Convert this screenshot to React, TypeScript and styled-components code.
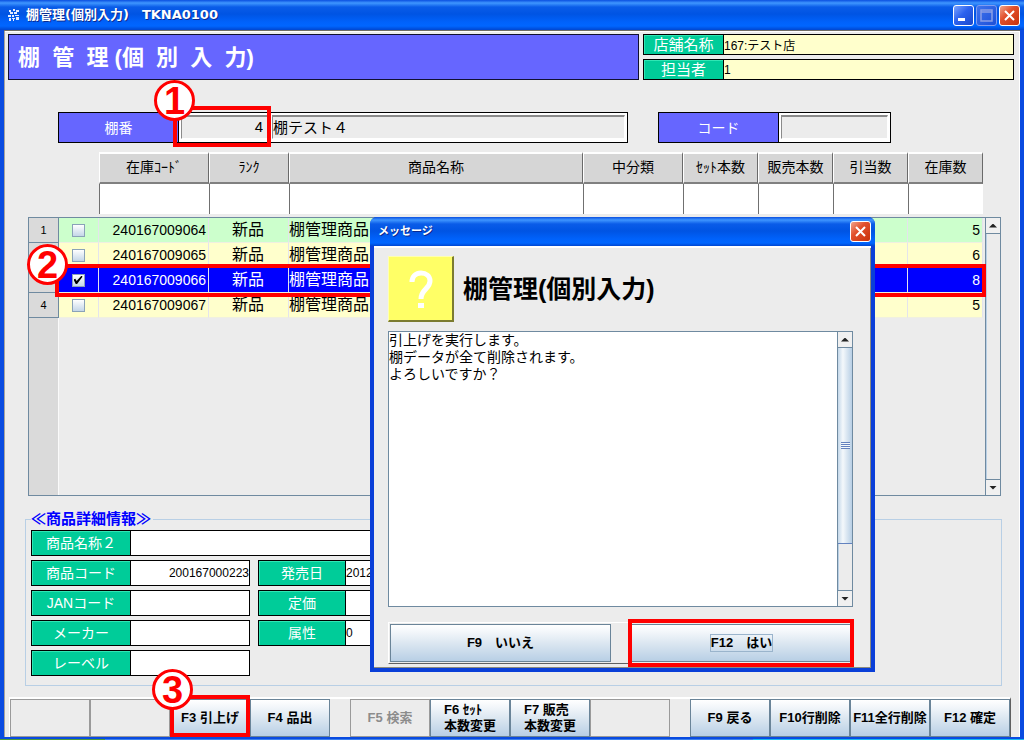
import React from 'react';
import styled, { createGlobalStyle, css } from 'styled-components';

const Global = createGlobalStyle`
  *, *::before, *::after { box-sizing: border-box; }
  body {
    margin: 0;
    background: #ececec;
    color: #000;
    font-family: "Liberation Sans", "Noto Sans CJK JP", sans-serif;
    font-size: 14px;
    line-height: 16px;
  }
  button, input, textarea { font-family: inherit; color: inherit; margin: 0; border-radius: 0; }
`;

const titleGradient = 'linear-gradient(#0a4fe0 0, #3f96ff 3px, #0a5ce8 7px, #0054e3 14px, #0062fb 22px, #0066ff 26px, #0046d0 100%)';
const metal = 'linear-gradient(#ffffff 0, #f2f6fa 20%, #dce7f1 50%, #b8cfe5 100%)';

const AppWindow = styled.main`
  position: relative;
  display: flex;
  flex-direction: column;
  min-height: 100vh;
  overflow: hidden;
`;

const TitleBar = styled.header<{ $h: number }>`
  display: flex;
  align-items: center;
  gap: 6px;
  height: ${p => p.$h}px;
  padding: 0 4px 0 8px;
  background: ${titleGradient};
  color: #fff;
`;

const TitleText = styled.h1<{ $size: number }>`
  flex: 1;
  margin: 0;
  font-family: "DejaVu Sans", "Noto Sans CJK JP", sans-serif;
  font-size: ${p => p.$size}px;
  line-height: 16px;
  font-weight: 700;
  white-space: pre;
  text-shadow: 1px 1px 0 #0a2a90;
`;

const CaptionButtons = styled.div`
  display: flex;
  gap: 2px;
`;

const CaptionButton = styled.button<{ $kind: 'blue' | 'dim' | 'close' }>`
  display: flex;
  width: 21px;
  height: 21px;
  padding: 0;
  border: 1px solid ${p => (p.$kind === 'dim' ? '#7f9cf0' : '#fff')};
  border-radius: 3px;
  background: ${p =>
    p.$kind === 'close'
      ? 'linear-gradient(135deg, #f0a58c, #e2502c 40%, #c8320c)'
      : p.$kind === 'dim'
        ? 'linear-gradient(135deg, #3f74ee, #1c4fd8)'
        : 'linear-gradient(135deg, #7ba4ff, #2c62ee 45%, #1a48cc)'};
  svg { width: 19px; height: 19px; display: block; }
`;

const Frame = styled.div`
  flex: 1;
  display: flex;
  flex-direction: column;
  padding: 3px 6px 0 4px;
  border: solid #0a4be0;
  border-width: 0 4px 2px;
  box-shadow: inset 0 1px 0 #6f6d66, inset 1px 0 0 #a8a49c, inset 0 2px 0 #fff, inset -1px 0 0 #fff;
`;

const Taskbar = styled.div`
  height: 1px;
  background: linear-gradient(90deg, #4b9a3c 105px, #3c81ee 105px, #3c81ee 753px, #19b9f2 753px);
`;

const Banner = styled.div`
  display: flex;
  gap: 4px;
  padding-top: 1px;
`;

const ScreenTitle = styled.h2`
  flex: 1;
  display: flex;
  align-items: center;
  height: 46px;
  margin: 0;
  padding: 2px 0 0 9px;
  border: 1px solid #101030;
  background: #6666ff;
  color: #fff;
  font-size: 22px;
  line-height: 30px;
  font-weight: 700;
  white-space: pre;
`;

const StoreInfo = styled.div`
  display: flex;
  flex-direction: column;
  justify-content: space-between;
  width: 371px;
`;

const Field = styled.div<{ $h: number; $w?: number }>`
  display: flex;
  height: ${p => p.$h}px;
  ${p => p.$w && css`width: ${p.$w}px;`}
  border: 1px solid #000;
`;

const FieldLabel = styled.label<{ $w: number; $size?: number }>`
  flex: none;
  display: flex;
  align-items: center;
  justify-content: center;
  width: ${p => p.$w}px;
  border-right: 1px solid #000;
  background: #00cc99;
  box-shadow: inset 1px 1px 0 #2fe6b4;
  color: #fff;
  font-size: ${p => p.$size ?? 14}px;
`;

const FieldInput = styled.input<{ $tone?: string; $right?: boolean }>`
  flex: 1;
  min-width: 0;
  padding: 0;
  border: 0;
  outline: 0;
  background: ${p => p.$tone ?? '#fff'};
  font-size: 12px;
  text-align: ${p => (p.$right ? 'right' : 'left')};
`;

const SearchRow = styled.div`
  display: flex;
  gap: 30px;
  padding: 32px 0 0 50px;
`;

const SearchPanel = styled.div<{ $w: number }>`
  display: flex;
  width: ${p => p.$w}px;
  height: 31px;
  border: 1px solid #000;
  background: #fff;
`;

const SearchLabel = styled.label`
  flex: none;
  display: flex;
  align-items: center;
  justify-content: center;
  width: 120px;
  border-right: 1px solid #000;
  background: #6666ff;
  color: #fff;
  font-size: 14px;
`;

const SunkenCell = styled.div<{ $w?: number }>`
  position: relative;
  display: flex;
  min-width: 0;
  ${p => (p.$w ? css`flex: none; width: ${p.$w}px;` : css`flex: 1;`)}
  padding: 2px 2px 3px;
`;

const SunkenInput = styled.input<{ $right?: boolean }>`
  flex: 1;
  min-width: 0;
  padding: 0 ${p => (p.$right ? 4 : 0)}px 2px 0;
  border: solid;
  border-width: 2px 1px 1px 1px;
  border-color: #8a8a8a #fff #fff #8a8a8a;
  outline: 0;
  background: #ececec;
  font-size: 15px;
  text-align: ${p => (p.$right ? 'right' : 'left')};
`;

const HeadTable = styled.table`
  table-layout: fixed;
  width: calc(100% - 122px);
  margin: 9px 0 0 91px;
  border-collapse: separate;
  border-spacing: 0;
  th {
    height: 32px;
    padding: 0 0 2px;
    border: solid;
    border-width: 2px 1px 2px 1px;
    border-color: #fff #6a6a6a #808080 #fff;
    background: #d6d6d6;
    font-size: 14px;
    font-weight: 400;
  }
  td {
    height: 30px;
    padding: 0;
    border-left: 1px solid #707070;
    background: #fff;
  }
`;

const FilterInput = styled.input`
  display: block;
  width: 100%;
  height: 29px;
  padding: 0 2px;
  border: 0;
  outline: 0;
  background: transparent;
`;

const GridBox = styled.section`
  position: relative;
  flex: 1 0 200px;
  display: flex;
  min-width: 0;
  margin: 3px 13px 0 20px;
  border: 1px solid #6f8aa0;
`;

const GridBody = styled.div`
  flex: 1;
  min-width: 0;
  background: linear-gradient(90deg, #dadada 29px, #fafafa 29px, #fafafa 30px, #ececec 30px);
`;

const DataTable = styled.table`
  table-layout: fixed;
  width: calc(100% - 2px);
  border-collapse: separate;
  border-spacing: 0;
`;

const DataRow = styled.tr<{ $tone: 'green' | 'yellow' | 'selected' }>`
  background: ${p => ({ green: '#ccffcc', yellow: '#ffffcc', selected: '#0000ff' })[p.$tone]};
  color: ${p => (p.$tone === 'selected' ? '#fff' : '#000')};
`;

const RowNumber = styled.th`
  height: 25px;
  padding: 0;
  border-right: 1px solid #6f8aa0;
  border-bottom: 1px solid #6f8aa0;
  background: #dadada;
  color: #000;
  font-size: 11px;
  font-weight: 400;
`;

const Cell = styled.td<{ $align?: 'left' | 'center' | 'right'; $num?: boolean }>`
  height: 25px;
  padding: 0 ${p => (p.$num ? 2 : 1)}px 0 0;
  border-right: 1px solid #e4e4ec;
  border-bottom: 1px solid #f0f0e0;
  font-size: ${p => (p.$num ? 14 : 16)}px;
  text-align: ${p => p.$align ?? 'left'};
  white-space: nowrap;
  overflow: hidden;
`;

const Check = styled.input`
  appearance: none;
  display: block;
  position: relative;
  width: 13px;
  height: 13px;
  margin: 0 auto;
  border: 1px solid #8aa2b8;
  background: linear-gradient(#fff, #c4d6e8);
  &:checked::after {
    content: '';
    position: absolute;
    inset: 1px;
    background: #000;
    clip-path: polygon(0 45%, 20% 35%, 35% 60%, 90% 0, 100% 15%, 40% 95%, 25% 95%);
  }
`;

const ScrollTrack = styled.div`
  flex: none;
  display: flex;
  flex-direction: column;
  width: 15px;
  border-left: 1px solid #6f8aa0;
  box-shadow: inset 1px 0 0 #b8cfe5;
  background: #ececec;
`;

const ScrollButton = styled.button<{ $down?: boolean }>`
  display: flex;
  align-items: center;
  justify-content: center;
  height: 16px;
  padding: 0;
  border: 0 solid #6f8aa0;
  border-width: ${p => (p.$down ? '1px 0 0' : '0 0 1px')};
  background: #f0f0f0;
  &::before {
    content: '';
    width: 8px;
    height: 4px;
    background: #222;
    clip-path: ${p => (p.$down ? 'polygon(0 0, 100% 0, 50% 100%)' : 'polygon(50% 0, 100% 100%, 0 100%)')};
  }
`;

const ScrollSpace = styled.div`
  flex: 1;
`;

const ScrollThumb = styled.div`
  display: flex;
  align-items: center;
  justify-content: center;
  height: 196px;
  border-bottom: 1px solid #6382bf;
  background: linear-gradient(90deg, #c4d8ea, #f4f8fb 35%, #b8cfe5);
  &::before {
    content: '';
    width: 9px;
    height: 7px;
    background: repeating-linear-gradient(#6382bf 0 1px, #f4f8fb 1px 2px);
  }
`;

const Details = styled.fieldset`
  display: flex;
  flex-direction: column;
  gap: 4px;
  min-width: 0;
  margin: 14px 12px 0 17px;
  padding: 2px 5px 9px;
  border: 1px solid #b8cfe5;
`;

const Legend = styled.legend`
  padding: 0 2px 0 0;
  color: #0000ff;
  font-size: 15px;
  line-height: 18px;
  font-weight: 700;
`;

const DetailRow = styled.div`
  display: flex;
  gap: 8px;
`;

const ButtonBar = styled.nav`
  display: flex;
  justify-content: space-between;
  margin: 11px 3px 0 1px;
  border: solid #fff;
  border-width: 2px 0 0 1px;
  border-right: 1px solid #606060;
`;

const ButtonGroup = styled.div`
  display: flex;
`;

const FunctionButton = styled.button<{ $plain?: boolean }>`
  position: relative;
  display: flex;
  align-items: center;
  justify-content: center;
  width: 80px;
  height: 38px;
  padding: 0;
  border: 1px solid ${p => (p.$plain ? '#9a9a9a' : '#6a8498')};
  background: ${p => (p.$plain ? '#ececec' : metal)};
  color: #000;
  font-size: 13px;
  line-height: 16px;
  font-weight: 700;
  text-align: left;
  white-space: pre;
  &:disabled { color: #8c8c8c; }
`;

const Highlight = styled.span<{ $t: number; $r: number; $b: number; $l: number }>`
  position: absolute;
  z-index: 1;
  top: ${p => p.$t}px;
  right: ${p => p.$r}px;
  bottom: ${p => p.$b}px;
  left: ${p => p.$l}px;
  border: 4px solid #ff0000;
  pointer-events: none;
`;

const RowHighlight = styled.span`
  position: absolute;
  z-index: 1;
  top: 46px;
  right: 14px;
  left: 26px;
  height: 33px;
  border: 4px solid #ff0000;
  pointer-events: none;
`;

const StepBadge = styled.span<{ $x: number; $y: number }>`
  position: absolute;
  top: ${p => p.$y}px;
  left: ${p => p.$x}px;
  display: flex;
  align-items: center;
  justify-content: center;
  width: 41px;
  height: 41px;
  border: 3px solid #ff0000;
  border-radius: 50%;
  background: #fff;
  color: #ff0000;
  font-size: 38px;
  line-height: 36px;
  font-weight: 700;
`;

const Dialog = styled.section`
  position: absolute;
  z-index: 2;
  top: 217px;
  left: 370px;
  width: 505px;
  border-radius: 7px 7px 0 0;
  overflow: hidden;
  background: #0a3fd8;
`;

const DialogBody = styled.div`
  display: flex;
  flex-direction: column;
  margin: 0 4px 4px;
  padding: 10px 18px 4px 14px;
  background: #ececec;
  box-shadow: inset 0 2px 0 #fff, inset -1px -1px 0 #8a8a80;
`;

const DialogHead = styled.div`
  display: flex;
  align-items: center;
  gap: 9px;
`;

const QuestionIcon = styled.div`
  width: 66px;
  height: 66px;
  border: solid;
  border-width: 1px 2px 2px 1px;
  border-color: #ffffb0 #7c7c30 #7c7c30 #ffffb0;
  background: #ffff66;
  svg { display: block; width: 63px; height: 63px; }
`;

const DialogTitle = styled.h3`
  margin: 0;
  font-size: 25px;
  line-height: 30px;
  font-weight: 700;
`;

const MessageBox = styled.div`
  display: flex;
  height: 276px;
  margin-top: 9px;
  border: 1px solid #6f8aa0;
  background: #fff;
`;

const MessageText = styled.textarea`
  flex: 1;
  min-width: 0;
  padding: 0;
  border: 0;
  outline: 0;
  resize: none;
  overflow: hidden;
  background: #fff;
  font-size: 14px;
  line-height: 17px;
`;

const DialogButtons = styled.div`
  display: flex;
  gap: 20px;
  margin-top: 15px;
  padding: 1px 1px 1px 1px;
  border: solid;
  border-width: 1px 0 1px 1px;
  border-color: #fff #fff #606060 #fff;
`;

const DialogButton = styled(FunctionButton)`
  flex: 1;
  width: auto;
`;

const FocusText = styled.span`
  border: 1px solid #9ab4cc;
`;

const CloseGlyph = () => (
  <svg viewBox="0 0 19 19" aria-hidden="true">
    <path d="M5 5l9 9M14 5l-9 9" stroke="#fff" strokeWidth="2" fill="none" />
  </svg>
);

const COLS = [110, 80, 0, 100, 75, 75, 75, 75];
const HEADS = ['在庫ｺｰﾄﾞ', 'ﾗﾝｸ', '商品名称', '中分類', 'ｾｯﾄ本数', '販売本数', '引当数', '在庫数'];

const Columns = () => (
  <>
    {COLS.map((w, i) => (
      <col key={i} width={w || undefined} />
    ))}
  </>
);

type Item = { code: string; count: number; tone: 'green' | 'yellow' | 'selected' };
const ITEMS: Item[] = [
  { code: '240167009064', count: 5, tone: 'green' },
  { code: '240167009065', count: 6, tone: 'yellow' },
  { code: '240167009066', count: 8, tone: 'selected' },
  { code: '240167009067', count: 5, tone: 'yellow' },
];

type DetailProps = { id: string; label: string; value?: string; lw: number; w: number; right?: boolean };
const Detail = ({ id, label, value = '', lw, w, right }: DetailProps) => (
  <Field $h={26} $w={w}>
    <FieldLabel htmlFor={id} $w={lw}>{label}</FieldLabel>
    <FieldInput id={id} readOnly defaultValue={value} $right={right} />
  </Field>
);

const Scrollbar = ({ thumb }: { thumb?: boolean }) => (
  <ScrollTrack>
    <ScrollButton aria-label="上へ" />
    {thumb && <ScrollThumb />}
    <ScrollSpace />
    <ScrollButton $down aria-label="下へ" />
  </ScrollTrack>
);

export default function App() {
  return (
    <AppWindow>
      <Global />
      <TitleBar $h={30}>
        <svg width="12" height="12" viewBox="0 0 12 12" aria-hidden="true">
          <path
            d="M1 1h2v2H1zM5 0h2v2H5zM8 1h3v2H8zM2 3h3v2H2zM6 3h3v2H6zM0 6h3v2H0zM4 6h2v2H4zM7 6h4v1H7zM1 9h2v3H1zM4 9h3v1H4zM5 10h1v2H5zM8 8h3v3H8z"
            fill="#e4ecff"
          />
        </svg>
        <TitleText $size={13}>棚管理(個別入力)　TKNA0100</TitleText>
        <CaptionButtons>
          <CaptionButton $kind="blue" aria-label="最小化">
            <svg viewBox="0 0 19 19" aria-hidden="true"><path d="M4 12h7v3H4z" fill="#fff" /></svg>
          </CaptionButton>
          <CaptionButton $kind="dim" aria-label="最大化">
            <svg viewBox="0 0 19 19" aria-hidden="true">
              <path d="M4 4h11v11H4zM4 6h11" stroke="#8b9fe6" strokeWidth="1.5" fill="none" />
            </svg>
          </CaptionButton>
          <CaptionButton $kind="close" aria-label="閉じる"><CloseGlyph /></CaptionButton>
        </CaptionButtons>
      </TitleBar>

      <Frame>
        <Banner>
          <ScreenTitle>{'棚  管  理 (個  別  入  力)'}</ScreenTitle>
          <StoreInfo>
            <Field $h={21}>
              <FieldLabel htmlFor="store" $w={80} $size={15}>店舗名称</FieldLabel>
              <FieldInput id="store" readOnly defaultValue="167:テスト店" $tone="#ffffcc" />
            </Field>
            <Field $h={21}>
              <FieldLabel htmlFor="staff" $w={80} $size={15}>担当者</FieldLabel>
              <FieldInput id="staff" readOnly defaultValue="1" $tone="#ffffcc" />
            </Field>
          </StoreInfo>
        </Banner>

        <SearchRow>
          <SearchPanel $w={570}>
            <SearchLabel htmlFor="shelf">棚番</SearchLabel>
            <SunkenCell $w={91}>
              <SunkenInput id="shelf" readOnly defaultValue="4" $right />
              <Highlight $t={-7} $r={-1} $b={-5} $l={-6}>
                <StepBadge $x={-23} $y={-30}>1</StepBadge>
              </Highlight>
            </SunkenCell>
            <SunkenCell>
              <SunkenInput aria-label="棚名称" readOnly defaultValue="棚テスト４" />
            </SunkenCell>
          </SearchPanel>
          <SearchPanel $w={233}>
            <SearchLabel htmlFor="code">コード</SearchLabel>
            <SunkenCell>
              <SunkenInput id="code" readOnly />
            </SunkenCell>
          </SearchPanel>
        </SearchRow>

        <HeadTable>
          <colgroup><Columns /></colgroup>
          <thead>
            <tr>{HEADS.map(h => <th key={h} scope="col">{h}</th>)}</tr>
          </thead>
          <tbody>
            <tr>{HEADS.map(h => <td key={h}><FilterInput aria-label={h} /></td>)}</tr>
          </tbody>
        </HeadTable>

        <GridBox>
          <GridBody>
            <DataTable>
              <colgroup>
                <col width={30} />
                <col width={40} />
                <Columns />
              </colgroup>
              <tbody>
                {ITEMS.map((it, i) => (
                  <DataRow key={it.code} $tone={it.tone}>
                    <RowNumber scope="row">{i + 1}</RowNumber>
                    <Cell>
                      <Check type="checkbox" aria-label={it.code} defaultChecked={it.tone === 'selected'} />
                    </Cell>
                    <Cell $align="right" $num>{it.code}</Cell>
                    <Cell $align="center">新品</Cell>
                    <Cell>棚管理商品</Cell>
                    <Cell />
                    <Cell />
                    <Cell />
                    <Cell />
                    <Cell $align="right" $num>{it.count}</Cell>
                  </DataRow>
                ))}
              </tbody>
            </DataTable>
          </GridBody>
          <Scrollbar />
          <RowHighlight>
            <StepBadge $x={-32} $y={-24}>2</StepBadge>
          </RowHighlight>
        </GridBox>

        <Details>
          <Legend>≪商品詳細情報≫</Legend>
          <Detail id="name2" label="商品名称２" lw={99} w={600} />
          <DetailRow>
            <Detail id="itemCode" label="商品コード" value="200167000223" lw={99} w={219} right />
            <Detail id="release" label="発売日" value="2012" lw={87} w={200} />
          </DetailRow>
          <DetailRow>
            <Detail id="jan" label="JANコード" lw={99} w={219} />
            <Detail id="price" label="定価" lw={87} w={200} />
          </DetailRow>
          <DetailRow>
            <Detail id="maker" label="メーカー" lw={99} w={219} />
            <Detail id="kind" label="属性" value="0" lw={87} w={200} />
          </DetailRow>
          <Detail id="label" label="レーベル" lw={99} w={219} />
        </Details>

        <ButtonBar>
          <ButtonGroup>
            <FunctionButton $plain disabled aria-label="F1" />
            <FunctionButton $plain disabled aria-label="F2" />
            <FunctionButton>
              F3 引上げ
              <Highlight $t={-5} $r={-1} $b={-1} $l={-1}>
                <StepBadge $x={-22} $y={-30}>3</StepBadge>
              </Highlight>
            </FunctionButton>
            <FunctionButton>F4 品出</FunctionButton>
          </ButtonGroup>
          <ButtonGroup>
            <FunctionButton $plain disabled>F5 検索</FunctionButton>
            <FunctionButton>{'F6 ｾｯﾄ\n本数変更'}</FunctionButton>
            <FunctionButton>{'F7 販売\n本数変更'}</FunctionButton>
            <FunctionButton $plain disabled aria-label="F8" />
          </ButtonGroup>
          <ButtonGroup>
            <FunctionButton>F9 戻る</FunctionButton>
            <FunctionButton>F10行削除</FunctionButton>
            <FunctionButton>F11全行削除</FunctionButton>
            <FunctionButton>F12 確定</FunctionButton>
          </ButtonGroup>
        </ButtonBar>
      </Frame>
      <Taskbar />

      <Dialog role="dialog" aria-labelledby="dialog-title">
        <TitleBar $h={29}>
          <TitleText as="h2" $size={11}>メッセージ</TitleText>
          <CaptionButton $kind="close" aria-label="閉じる"><CloseGlyph /></CaptionButton>
        </TitleBar>
        <DialogBody>
          <DialogHead>
            <QuestionIcon>
              <svg viewBox="0 0 63 63" aria-hidden="true">
                <path
                  d="M23 25c0-6 4-9 9-9s9 3 9 8c0 8-9 8-9 18"
                  fill="none"
                  stroke="#fff"
                  strokeWidth="5"
                />
                <path d="M29 46h6v5h-6z" fill="#fff" />
              </svg>
            </QuestionIcon>
            <DialogTitle id="dialog-title">棚管理(個別入力)</DialogTitle>
          </DialogHead>
          <MessageBox>
            <MessageText
              readOnly
              aria-label="メッセージ"
              defaultValue={'引上げを実行します。\n棚データが全て削除されます。\nよろしいですか？'}
            />
            <Scrollbar thumb />
          </MessageBox>
          <DialogButtons>
            <DialogButton>F9　いいえ</DialogButton>
            <DialogButton>
              <FocusText>F12　はい</FocusText>
              <Highlight $t={-6} $r={-3} $b={-6} $l={-4} />
            </DialogButton>
          </DialogButtons>
        </DialogBody>
      </Dialog>
    </AppWindow>
  );
}
